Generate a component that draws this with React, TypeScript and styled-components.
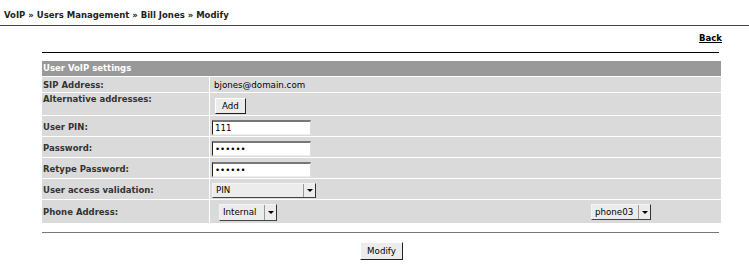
import React from 'react';
import styled, { createGlobalStyle } from 'styled-components';

const GlobalStyle = createGlobalStyle`
  html, body { margin: 0; padding: 0; background: #fff; }
  body { font-family: "DejaVu Sans", Verdana, sans-serif; color: #000; }
`;

const Page = styled.div`
  width: 749px;
`;

const Breadcrumb = styled.div`
  box-sizing: border-box;
  height: 26px;
  padding: 10px 0 0 4px;
  border-bottom: 1px solid #444;
  font-size: 8.5px;
  line-height: 11px;
  font-weight: bold;
  color: #222;
`;

const BackRow = styled.div`
  box-sizing: border-box;
  height: 26px;
  padding: 7px 27px 0 0;
  text-align: right;
  font-size: 8.5px;
  line-height: 11px;
`;

const BackLink = styled.a`
  color: #000;
  font-weight: bold;
  text-decoration: underline;
  cursor: pointer;
`;

const Content = styled.div`
  margin: 0 28px 0 42px;
`;

const Rule = styled.div<{ $color: string; $gap: number }>`
  width: 677px;
  height: 0;
  border-top: 1px solid ${(p) => p.$color};
  margin-top: ${(p) => p.$gap}px;
`;

const Table = styled.div`
  display: flex;
  flex-direction: column;
  gap: 1px;
  margin-top: 8px;
  background: #fff;
`;

const HeaderRow = styled.div`
  height: 15px;
  background: #999;
  color: #fff;
  font-weight: bold;
  font-size: 8.5px;
  line-height: 15px;
  padding-left: 1px;
`;

const Row = styled.div<{ $h: number }>`
  display: grid;
  grid-template-columns: 167px 1fr;
  column-gap: 1px;
  height: ${(p) => p.$h}px;
`;

const LabelCell = styled.div<{ $top?: boolean }>`
  box-sizing: border-box;
  background: #dadada;
  display: flex;
  align-items: ${(p) => (p.$top ? 'flex-start' : 'center')};
  padding: ${(p) => (p.$top ? '1px' : '2px')} 0 0 1px;
  font-size: 8.5px;
  line-height: 11px;
  font-weight: bold;
  color: #333;
`;

const ValueCell = styled.div<{ $pt?: number }>`
  box-sizing: border-box;
  background: #dadada;
  display: flex;
  align-items: center;
  padding: ${(p) => p.$pt ?? 0}px 0 0 2px;
  font-size: 8.7px;
  line-height: 11px;
`;

const ValueText = styled.span`
  padding-left: 2px;
`;

const Button = styled.button<{ $ml?: number; $h?: number }>`
  box-sizing: border-box;
  margin: 0 0 0 ${(p) => p.$ml ?? 0}px;
  height: ${(p) => p.$h ?? 15}px;
  padding: 0 6px;
  background: #ececec;
  border: 1px solid;
  border-color: #fff #222 #222 #fff;
  font-family: "DejaVu Sans", Verdana, sans-serif;
  font-size: 8.7px;
  line-height: 12px;
  color: #000;
`;

const TextInput = styled.input`
  box-sizing: border-box;
  width: 99px;
  height: 15px;
  margin: 0;
  padding: 0 2px;
  background: #fff;
  border-style: solid;
  border-width: 2px 1px 1px 1px;
  border-color: #777 #ddd #eee #222;
  font-family: "DejaVu Sans", Verdana, sans-serif;
  font-size: 8.7px;
  color: #000;
  outline: none;
`;

const SelectBox = styled.div<{ $w: number; $h: number; $ml?: number }>`
  box-sizing: border-box;
  display: inline-flex;
  align-items: stretch;
  width: ${(p) => p.$w}px;
  height: ${(p) => p.$h}px;
  margin-left: ${(p) => p.$ml ?? 0}px;
  background: #ececec;
  border: 1px solid;
  border-color: #f4f4f4 #333 #444 #f4f4f4;
  font-size: 8.7px;
`;

const SelectText = styled.span`
  flex: 1;
  display: flex;
  align-items: center;
  padding-left: 3px;
  white-space: nowrap;
`;

const SelectArrow = styled.span`
  width: 11px;
  border-left: 1px solid #999;
  display: flex;
  align-items: center;
  justify-content: center;
  &::after {
    content: '';
    border-left: 3px solid transparent;
    border-right: 3px solid transparent;
    border-top: 3px solid #000;
  }
`;

const Footer = styled.div`
  display: flex;
  justify-content: center;
  width: 679px;
  margin-top: 9px;
`;

type SelectProps = { value: string; w: number; h?: number; ml?: number };
const Select = ({ value, w, h = 15, ml }: SelectProps) => (
  <SelectBox $w={w} $h={h} $ml={ml}>
    <SelectText>{value}</SelectText>
    <SelectArrow />
  </SelectBox>
);

export default function App() {
  return (
    <Page>
      <GlobalStyle />
      <Breadcrumb>VoIP » Users Management » Bill Jones » Modify</Breadcrumb>
      <BackRow>
        <BackLink>Back</BackLink>
      </BackRow>
      <Content>
        <Rule $color="#000" $gap={0} />
        <Table>
          <HeaderRow>User VoIP settings</HeaderRow>
          <Row $h={15}>
            <LabelCell>SIP Address:</LabelCell>
            <ValueCell $pt={1}>
              <ValueText>bjones@domain.com</ValueText>
            </ValueCell>
          </Row>
          <Row $h={22}>
            <LabelCell $top>Alternative addresses:</LabelCell>
            <ValueCell $pt={3}>
              <Button $ml={3} $h={16}>Add</Button>
            </ValueCell>
          </Row>
          <Row $h={20}>
            <LabelCell>User PIN:</LabelCell>
            <ValueCell $pt={2}>
              <TextInput type="text" defaultValue="111" readOnly />
            </ValueCell>
          </Row>
          <Row $h={20}>
            <LabelCell>Password:</LabelCell>
            <ValueCell $pt={2}>
              <TextInput type="text" defaultValue="••••••" readOnly />
            </ValueCell>
          </Row>
          <Row $h={20}>
            <LabelCell>Retype Password:</LabelCell>
            <ValueCell $pt={2}>
              <TextInput type="text" defaultValue="••••••" readOnly />
            </ValueCell>
          </Row>
          <Row $h={20}>
            <LabelCell>User access validation:</LabelCell>
            <ValueCell $pt={2}>
              <Select value="PIN" w={104} />
            </ValueCell>
          </Row>
          <Row $h={23}>
            <LabelCell>Phone Address:</LabelCell>
            <ValueCell $pt={1}>
              <Select value="Internal" w={58} h={17} ml={7} />
              <Select value="phone03" w={60} h={16} ml={314} />
            </ValueCell>
          </Row>
        </Table>
        <Rule $color="#777" $gap={9} />
        <Footer>
          <Button $h={18}>Modify</Button>
        </Footer>
      </Content>
    </Page>
  );
}
